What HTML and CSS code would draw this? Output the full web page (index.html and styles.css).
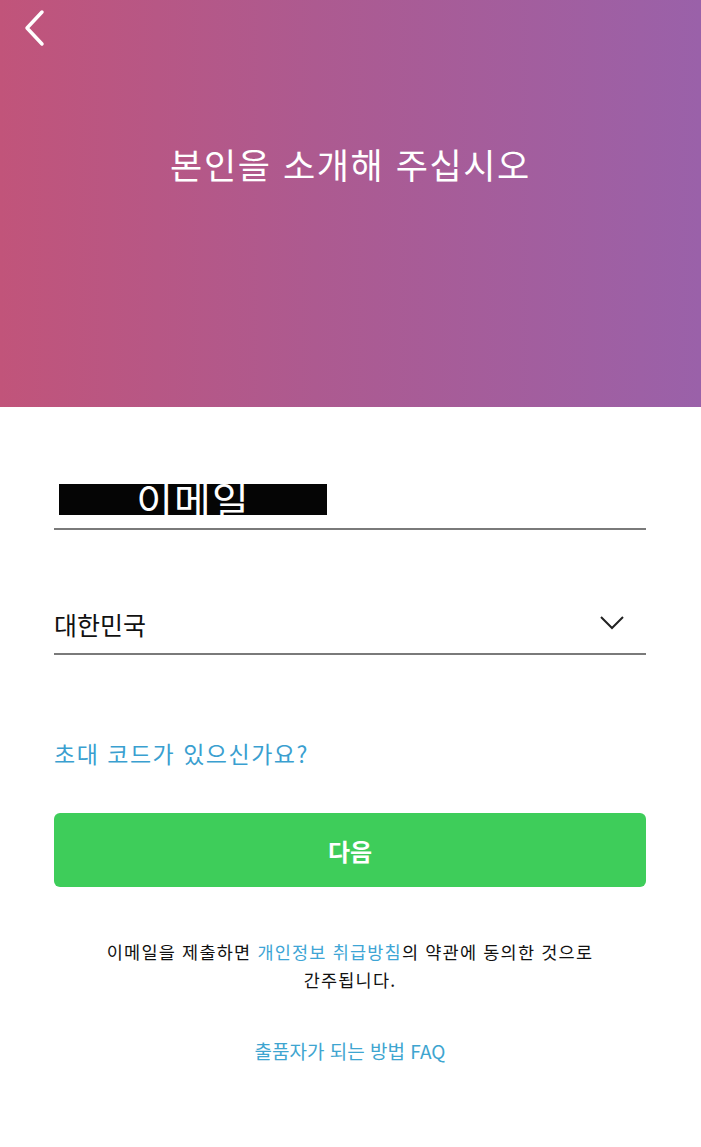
FILE: index.html
```html
<!DOCTYPE html>
<html lang="ko">
<head>
  <meta charset="UTF-8">
  <meta name="viewport" content="width=device-width, initial-scale=1.0">
  <title>본인을 소개해 주십시오</title>
  <link rel="stylesheet" href="styles.css">
</head>
<body>
  <header class="hero">
    <a class="back" href="#">
      <svg width="24" height="40" viewBox="0 0 24 40">
        <path d="M20 4 L5 20 L20 36" fill="none" stroke="#fff" stroke-width="3.5" stroke-linecap="round" stroke-linejoin="round"/>
      </svg>
    </a>
    <h1>본인을 소개해 주십시오</h1>
  </header>

  <main class="form">
    <div class="field email-field">
      <span class="masked">이메일</span>
    </div>

    <div class="field country-field">
      <span class="country">대한민국</span>
      <svg class="chevron" width="26" height="16" viewBox="0 0 26 16">
        <path d="M2 2 L13 13 L24 2" fill="none" stroke="#222" stroke-width="2"/>
      </svg>
    </div>

    <a class="invite" href="#">초대 코드가 있으신가요?</a>

    <button type="button" class="next">다음</button>

    <p class="terms">이메일을 제출하면 <a href="#">개인정보 취급방침</a>의 약관에 동의한 것으로<br>간주됩니다.</p>

    <a class="faq" href="#">출품자가 되는 방법 FAQ</a>
  </main>
</body>
</html>
```

FILE: styles.css
```css
body {
  margin: 0;
  background: #ffffff;
  font-family: "Noto Sans CJK KR", "Noto Sans", sans-serif;
  color: #111;
}

a {
  text-decoration: none;
}

/* Header */
.hero {
  height: 407px;
  background: linear-gradient(90deg, #c1547a 0%, #ad5a90 45%, #9a61a9 100%);
  padding-top: 1px;
  box-sizing: border-box;
}

.back {
  display: block;
  width: 24px;
  margin: 7px 0 0 22px;
}

.back svg {
  display: block;
}

.hero h1 {
  margin: 90px 0 0;
  text-align: center;
  color: #fff;
  font-size: 35px;
  font-weight: 400;
  letter-spacing: 1.6px;
  line-height: 52px;
}

/* Form */
.form {
  padding: 0 55px 0 54px;
  display: flex;
  flex-direction: column;
}

.field {
  border-bottom: 2px solid #7a7a7a;
  display: flex;
  align-items: center;
}

.email-field {
  margin-top: 77px;
  height: 44px;
  align-items: flex-start;
}

.masked {
  margin-left: 5px;
  width: 268px;
  height: 31px;
  background: #050505;
  color: #fff;
  font-size: 40px;
  line-height: 30px;
  text-align: center;
  letter-spacing: 1px;
}

.country-field {
  margin-top: 68px;
  height: 55px;
  justify-content: space-between;
}

.country {
  font-size: 25px;
  color: #111;
  margin-top: -4px;
}

.chevron {
  margin-right: 21px;
  margin-top: -6px;
}

.invite {
  margin-top: 81px;
  color: #3a9fd0;
  font-size: 23px;
  letter-spacing: 1.5px;
  line-height: 34px;
}

.next {
  margin-top: 43px;
  height: 74px;
  border: none;
  border-radius: 6px;
  background: #3ecd5a;
  color: #fff;
  font-family: inherit;
  font-size: 24px;
  font-weight: 700;
  cursor: pointer;
}

.terms {
  margin: 51px 0 0;
  text-align: center;
  font-size: 17.5px;
  line-height: 28px;
  letter-spacing: 1.2px;
  color: #111;
}

.terms a {
  color: #3ea5d5;
}

.faq {
  margin-top: 43px;
  align-self: center;
  color: #3ea5d0;
  font-size: 19px;
}
```
